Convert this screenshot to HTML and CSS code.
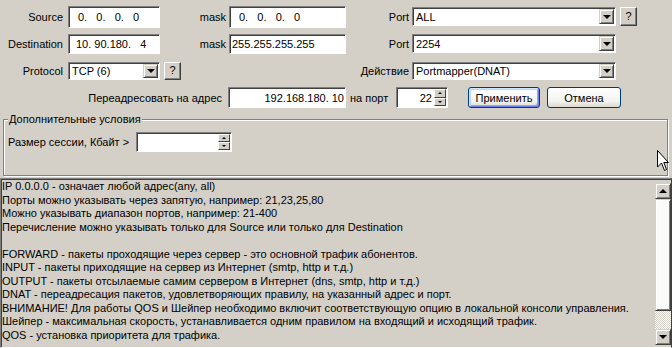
FILE: index.html
```html
<!DOCTYPE html>
<html lang="ru">
<head>
    <meta charset="UTF-8">
    <title>Правило</title>
    <link rel="stylesheet" href="styles.css">
</head>
<body>
<div class="dlg">
    <div class="form">
        <!-- ligne 1 -->
        <span class="lbl">Source</span>
        <div class="edit ip pad-ip h22">0.   0.   0.   0</div>
        <span class="lbl lbl-b">mask</span>
        <div class="edit ip pad-ip h22">0.   0.   0.   0</div>
        <span class="lbl lbl-c">Port</span>
        <div class="combo h19"><span class="val">ALL</span><span class="drop"></span></div>
        <button class="btn help h19">?</button>

        <!-- ligne 2 -->
        <span class="lbl">Destination</span>
        <div class="edit ip pad-dst h20">10. 90.180.   4</div>
        <span class="lbl lbl-b">mask</span>
        <div class="edit ip pad-msk h20">255.255.255.255</div>
        <span class="lbl lbl-c">Port</span>
        <div class="combo h19"><span class="val">2254</span><span class="drop"></span></div>
        <span></span>

        <!-- ligne 3 -->
        <span class="lbl">Protocol</span>
        <div class="combo h18"><span class="val">TCP (6)</span><span class="drop"></span></div>
        <button class="btn help h18 help-b">?</button>
        <span></span>
        <span class="lbl lbl-c">Действие</span>
        <div class="combo h18"><span class="val">Portmapper(DNAT)</span><span class="drop"></span></div>
        <span></span>

        <!-- ligne 4 -->
        <div class="redir">
            <span class="lbl lbl-redir">Переадресовать на адрес</span>
            <div class="edit ip ip-right h21">192.168.180. 10</div>
            <span class="lbl-port">на порт</span>
            <div class="spin spin-port">
                <div class="edit spin-val">22</div>
                <div class="spin-btns"><span class="sb up"></span><span class="sb down"></span></div>
            </div>
            <button class="push push-def">Применить</button>
            <button class="push">Отмена</button>
        </div>
    </div>

    <fieldset class="group">
        <legend>Дополнительные условия</legend>
        <div class="sess">
            <span class="lbl-sess">Размер сессии, Кбайт &gt;</span>
            <div class="spin spin-sess">
                <div class="edit spin-val"></div>
                <div class="spin-btns"><span class="sb up"></span><span class="sb down"></span></div>
            </div>
        </div>
    </fieldset>

    <div class="memo">
        <div class="memo-text">
            <div>IP 0.0.0.0 - означает любой адрес(any, all)</div>
            <div>Порты можно указывать через запятую, например: 21,23,25,80</div>
            <div>Можно указывать диапазон портов, например: 21-400</div>
            <div>Перечисление можно указывать только для Source или только для Destination</div>
            <div>&nbsp;</div>
            <div>FORWARD - пакеты проходящие через сервер - это основной трафик абонентов.</div>
            <div>INPUT - пакеты приходящие на сервер из Интернет (smtp, http и т.д.)</div>
            <div>OUTPUT - пакеты отсылаемые самим сервером в Интернет (dns, smtp, http и т.д.)</div>
            <div>DNAT - переадресация пакетов, удовлетворяющих правилу, на указанный адрес и порт.</div>
            <div>ВНИМАНИЕ! Для работы QOS и Шейпер необходимо включит соответствующую опцию в локальной консоли управления.</div>
            <div>Шейпер - максимальная скорость, устанавливается одним правилом на входящий и исходящий трафик.</div>
            <div>QOS - установка приоритета для трафика.</div>
        </div>
        <div class="vscroll">
            <span class="sbtn"><i class="tri-up"></i></span>
            <span class="thumb"></span>
            <span class="track"></span>
            <span class="sbtn"><i class="tri-down"></i></span>
        </div>
    </div>

    <svg class="cursor" width="12" height="21" viewBox="0 0 12 21">
        <path d="M0.5 0.5 L0.5 17 L4.5 13 L7.5 20.5 L9.5 19.5 L6.8 12.5 L11.5 12.5 Z" fill="#fff" stroke="#000" stroke-width="1"/>
    </svg>
</div>
</body>
</html>
```

FILE: styles.css
```css
/* Base */
* {
    margin: 0;
    padding: 0;
    box-sizing: border-box;
}

body {
    width: 672px;
    height: 348px;
    overflow: hidden;
    background: #d4d0c8;
    font-family: "Liberation Sans", Arial, sans-serif;
    font-size: 11px;
    color: #000;
}

.dlg {
    position: relative;
    height: 348px;
    display: flex;
    flex-direction: column;
}

/* Grille du haut */
.form {
    display: grid;
    grid-template-columns: 68px 92px 69px 117px 66px 204px 21px;
    grid-auto-rows: 27px;
    align-items: center;
    padding-top: 3px;
}

.lbl {
    text-align: right;
    white-space: nowrap;
    padding-right: 5px;
}

.lbl-b, .lbl-c {
    padding-right: 3px;
}

/* Champs */
.edit {
    background: #fff;
    border: 1px solid;
    border-color: #808080 #fff #fff #808080;
    box-shadow: inset 1px 1px 0 #404040;
    display: flex;
    align-items: center;
    white-space: pre;
}

.h22 { height: 22px; }
.h21 { height: 21px; }
.h20 { height: 20px; }
.h19 { height: 19px; }
.h18 { height: 18px; }

.pad-ip { padding-left: 9px; }
.pad-dst { padding-left: 7px; }
.pad-msk { padding-left: 2px; }

.ip-right {
    justify-content: flex-end;
    padding-right: 1px;
    width: 118px;
}

/* Liste déroulante */
.combo {
    background: #fff;
    border: 1px solid;
    border-color: #808080 #fff #fff #808080;
    box-shadow: inset 1px 1px 0 #404040;
    display: flex;
    align-items: stretch;
    padding: 1px;
}

.combo .val {
    flex: 1;
    display: flex;
    align-items: center;
    padding-left: 2px;
}

.drop {
    width: 15px;
    background: #d4d0c8;
    border: 1px solid;
    border-color: #d4d0c8 #404040 #404040 #d4d0c8;
    box-shadow: inset 1px 1px 0 #fff, inset -1px -1px 0 #808080;
    display: flex;
    align-items: center;
    justify-content: center;
}

.drop::after {
    content: '';
    border-top: 4px solid #000;
    border-left: 4px solid transparent;
    border-right: 4px solid transparent;
    margin-top: 1px;
}

/* Boutons gris */
.btn {
    font: inherit;
    background: #d4d0c8;
    border: 1px solid;
    border-color: #fff #404040 #404040 #fff;
    box-shadow: inset -1px -1px 0 #808080;
    color: #000;
}

.help {
    width: 17px;
    margin-left: 4px;
    padding-bottom: 1px;
}

/* Ligne de redirection */
.redir {
    grid-column: 1 / -1;
    display: flex;
    align-items: center;
    height: 27px;
}

.lbl-redir {
    width: 228px;
    padding-right: 6px;
}

.lbl-port {
    width: 50px;
    padding-left: 4px;
}

.spin {
    display: flex;
    background: #fff;
    border: 1px solid;
    border-color: #808080 #fff #fff #808080;
    box-shadow: inset 1px 1px 0 #404040;
}

.spin-val {
    flex: 1;
    border: none;
    box-shadow: none;
    justify-content: flex-end;
    padding-right: 2px;
    background: transparent;
}

.spin-port {
    width: 52px;
    height: 21px;
}

.spin-btns {
    width: 13px;
    display: flex;
    flex-direction: column;
    padding: 1px 1px 1px 0;
}

.sb {
    flex: 1;
    background: #d4d0c8;
    border: 1px solid;
    border-color: #fff #404040 #404040 #fff;
    display: flex;
    align-items: center;
    justify-content: center;
}

.sb.up::after {
    content: '';
    border-bottom: 2px solid #000;
    border-left: 2px solid transparent;
    border-right: 2px solid transparent;
}

.sb.down::after {
    content: '';
    border-top: 2px solid #000;
    border-left: 2px solid transparent;
    border-right: 2px solid transparent;
}

/* Boutons XP */
.push {
    font: inherit;
    height: 21px;
    width: 74px;
    margin-left: 7px;
    border: 1px solid #003c74;
    border-radius: 3px;
    background: linear-gradient(#fff, #f3f3ef 70%, #dcd8cc);
    color: #000;
}

.push-def {
    width: 72px;
    margin-left: 20px;
    box-shadow: inset 1px 1px 0 #cee7ff, inset -1px -1px 0 #6982ee, inset 2px 2px 0 #bcd4f6, inset -2px -2px 0 #89ade4;
}

/* Cadre des conditions */
.group {
    margin: 2px 4px 0 3px;
    height: 63px;
    border: 1px solid #808080;
    box-shadow: 1px 1px 0 #fff, inset 1px 1px 0 #fff;
    padding: 6px 4px 0 4px;
}

.group legend {
    padding: 0 1px;
    line-height: 13px;
    background: #d4d0c8;
}

.sess {
    display: flex;
    align-items: center;
    height: 20px;
}

.lbl-sess {
    width: 128px;
}

.spin-sess {
    width: 96px;
    height: 20px;
}

/* Zone de texte */
.memo {
    flex: 1;
    margin-top: 2px;
    display: flex;
    border: 1px solid;
    border-color: #808080 #404040 #fff #808080;
    box-shadow: inset 1px 1px 0 #404040;
    overflow: hidden;
}

.memo-text {
    flex: 1;
    padding: 1px 0 0 1px;
    line-height: 13.5px;
    white-space: nowrap;
    overflow: hidden;
}

.vscroll {
    width: 16px;
    margin: 4px 0 2px 0;
    display: flex;
    flex-direction: column;
}

.sbtn {
    height: 16px;
    flex: none;
    background: #d4d0c8;
    border: 1px solid;
    border-color: #d4d0c8 #404040 #404040 #d4d0c8;
    box-shadow: inset 1px 1px 0 #fff, inset -1px -1px 0 #808080;
    display: flex;
    align-items: center;
    justify-content: center;
}

.tri-up {
    border-bottom: 4px solid #000;
    border-left: 4px solid transparent;
    border-right: 4px solid transparent;
}

.tri-down {
    border-top: 4px solid #000;
    border-left: 4px solid transparent;
    border-right: 4px solid transparent;
}

.thumb {
    height: 112px;
    flex: none;
    background: #fbfbf9;
    border: 1px solid;
    border-color: #d4d0c8 #404040 #404040 #d4d0c8;
    box-shadow: inset 1px 1px 0 #fff, inset -1px -1px 0 #808080;
}

.track {
    flex: 1;
    background-image: repeating-conic-gradient(#fff 0 25%, #d4d0c8 0 50%);
    background-size: 2px 2px;
}

/* Pointeur de la souris */
.cursor {
    position: absolute;
    left: 657px;
    top: 150px;
}
```
